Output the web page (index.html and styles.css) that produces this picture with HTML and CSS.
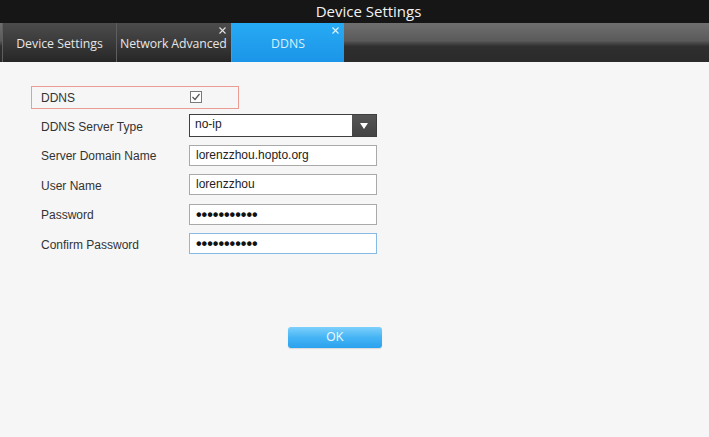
FILE: index.html
```html
<!DOCTYPE html>
<html>
<head>
<meta charset="utf-8">
<link rel="stylesheet" href="styles.css">
</head>
<body>
<div class="titlebar">Device Settings</div>
<div class="tabbar">
  <div class="tab">Device Settings</div>
  <div class="tab">Network Advanced<svg class="close" width="7" height="7" viewBox="0 0 7 7"><path d="M0.5 0.5 L6.5 6.5 M6.5 0.5 L0.5 6.5" stroke="#e2e2e2" stroke-width="1.1"/></svg></div>
  <div class="tab active">DDNS<svg class="close" width="7" height="7" viewBox="0 0 7 7"><path d="M0.5 0.5 L6.5 6.5 M6.5 0.5 L0.5 6.5" stroke="#e2f4ff" stroke-width="1.1"/></svg></div>
</div>
<div class="content">
  <div class="ddns-row">
    <span class="label">DDNS</span>
    <svg class="check" width="12" height="12" viewBox="0 0 12 12"><rect x="0.5" y="0.5" width="11" height="11" fill="#fff" stroke="#7a7a7a"/><path d="M2.5 6 L5 8.5 L9.5 3" fill="none" stroke="#555" stroke-width="1.2"/></svg>
  </div>
  <div class="rows">
    <div class="row">
      <span class="label">DDNS Server Type</span>
      <div class="select"><span class="val">no-ip</span><span class="arrow"><svg width="8" height="6" viewBox="0 0 8 6"><path d="M0 0 H8 L4 6 Z" fill="#fff"/></svg></span></div>
    </div>
    <div class="row">
      <span class="label">Server Domain Name</span>
      <div class="input">lorenzzhou.hopto.org</div>
    </div>
    <div class="row">
      <span class="label">User Name</span>
      <div class="input">lorenzzhou</div>
    </div>
    <div class="row">
      <span class="label">Password</span>
      <div class="input dots">•••••••••••</div>
    </div>
    <div class="row">
      <span class="label">Confirm Password</span>
      <div class="input dots focus">•••••••••••</div>
    </div>
  </div>
  <div class="btn">OK</div>
</div>
</body>
</html>
```
FILE: styles.css
```css
html, body {
  margin: 0;
  padding: 0;
  background: #f6f6f6;
  width: 709px;
  height: 437px;
  overflow: hidden;
}
.titlebar {
  height: 23px;
  background: #161616;
  color: #f2f2f2;
  font-family: "Open Sans", "Noto Sans", sans-serif;
  font-size: 15px;
  line-height: 23px;
  text-align: center;
  padding-left: 28px;
}
.tabbar {
  height: 39px;
  display: flex;
  padding-left: 2px;
  background: linear-gradient(#6f6f6f 0%, #5a5a5a 45%, #2f2f2f 60%, #2a2a2a 100%);
}
.tab {
  position: relative;
  box-sizing: border-box;
  width: 114px;
  border-left: 1px solid #5e5e5e;
  background: linear-gradient(#4c4c4c, #3a3a3a 50%, #262626);
  color: #e6e6e6;
  font-family: "Open Sans", "Noto Sans", sans-serif;
  font-size: 12.3px;
  line-height: 16px;
  padding-top: 13px;
  text-align: center;
  white-space: nowrap;
}
.tab:nth-child(2) {
  text-align: left;
  padding-left: 3px;
  width: 115px;
  letter-spacing: -0.1px;
}
.tab.active {
  border-left: 1px solid #2aa9f3;
  background: linear-gradient(#27aaf4, #1b95e8);
  color: #d6f0ff;
  width: 113px;
}
.close {
  position: absolute;
  top: 4px;
  right: 5px;
}
.content {
  padding: 24px 0 0 31px;
  font-family: "Liberation Sans", Arial, sans-serif;
  font-size: 12px;
  color: #333;
}
.ddns-row {
  box-sizing: border-box;
  width: 208px;
  height: 23px;
  border: 1px solid #eb9d93;
  display: flex;
  align-items: center;
  padding-left: 9px;
}
.ddns-row .label {
  width: 149px;
  padding-top: 1px;
}
.check {
  margin-top: -2px;
}
.rows {
  margin-top: 2px;
  padding-left: 10px;
}
.row {
  height: 29.5px;
  display: flex;
  align-items: center;
}
.row .label {
  width: 148px;
  padding-top: 2px;
}
.select {
  box-sizing: border-box;
  width: 188px;
  height: 23px;
  border: 1px solid #3f3f3f;
  background: #fff;
  display: flex;
  color: #222;
}
.select .val {
  flex: 1;
  padding-left: 5px;
  line-height: 19px;
}
.select .arrow {
  width: 24px;
  background: linear-gradient(#555, #444);
  display: flex;
  align-items: center;
  justify-content: center;
}
.input {
  box-sizing: border-box;
  width: 188px;
  height: 21px;
  border: 1px solid #a9a9a9;
  background: #fff;
  padding-left: 6px;
  line-height: 19px;
  color: #222;
}
.input.dots {
  font-size: 16px;
  line-height: 20px;
  color: #111;
  font-weight: bold;
}
.input.focus {
  border-color: #86b9e3;
}
.btn {
  margin: 68px 0 0 257px;
  width: 94px;
  height: 21px;
  border-radius: 3px;
  background: linear-gradient(#7dd0fb, #45b4f5 50%, #2aa2ee);
  color: #e8f7ff;
  text-align: center;
  line-height: 21px;
  font-size: 12px;
  box-shadow: 0 1px 1px rgba(0,0,0,0.12);
}
```
